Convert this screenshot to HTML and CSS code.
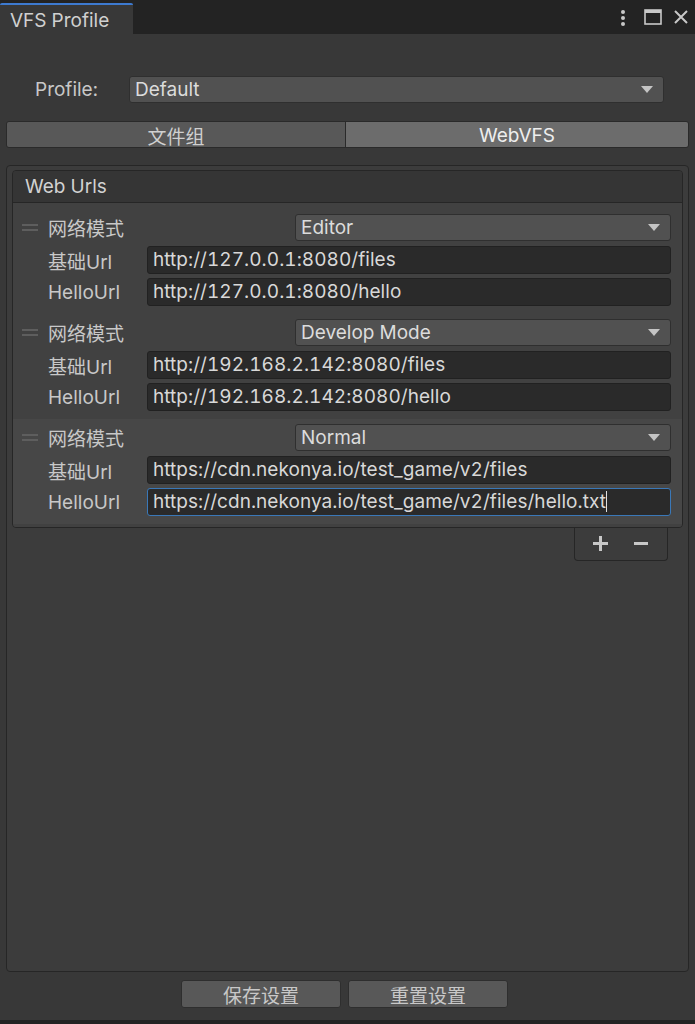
FILE: index.html
```html
<!DOCTYPE html>
<html lang="zh">
<head>
<meta charset="utf-8">
<title>VFS Profile</title>
<link rel="stylesheet" href="styles.css">
</head>
<body>
<div class="titlebar">
  <div class="tab">VFS Profile</div>
  <div class="win-controls">
    <svg class="ic-kebab" width="8" height="18" viewBox="0 0 8 18"><circle cx="4" cy="3" r="2"/><circle cx="4" cy="9" r="2"/><circle cx="4" cy="15" r="2"/></svg>
    <svg class="ic-max" width="18" height="16" viewBox="0 0 18 16"><rect x="1" y="1" width="16" height="14" fill="none" stroke="#c8c8c8" stroke-width="1.6"/><rect x="1" y="1" width="16" height="3" fill="#c8c8c8"/></svg>
    <svg class="ic-close" width="16" height="16" viewBox="0 0 16 16"><path d="M2 2 L14 14 M14 2 L2 14" stroke="#c8c8c8" stroke-width="2" fill="none"/></svg>
  </div>
</div>

<div class="content">
  <div class="profile-row">
    <span class="profile-label">Profile:</span>
    <div class="popup popup-wide"><span>Default</span><span class="arrow"></span></div>
  </div>

  <div class="tabs">
    <div class="seg">文件组</div>
    <div class="seg seg-on">WebVFS</div>
  </div>

  <div class="panel">
    <div class="list">
      <div class="list-head">Web Urls</div>
      <div class="list-body">
        <div class="elem">
          <div class="row">
            <span class="handle"></span><span class="lbl lbl-mode">网络模式</span>
            <div class="popup"><span>Editor</span><span class="arrow"></span></div>
          </div>
          <div class="row">
            <span class="handle-space"></span><span class="lbl">基础Url</span>
            <div class="field">http://127.0.0.1:8080/files</div>
          </div>
          <div class="row">
            <span class="handle-space"></span><span class="lbl">HelloUrl</span>
            <div class="field">http://127.0.0.1:8080/hello</div>
          </div>
        </div>
        <div class="elem">
          <div class="row">
            <span class="handle"></span><span class="lbl lbl-mode">网络模式</span>
            <div class="popup"><span>Develop Mode</span><span class="arrow"></span></div>
          </div>
          <div class="row">
            <span class="handle-space"></span><span class="lbl">基础Url</span>
            <div class="field">http://192.168.2.142:8080/files</div>
          </div>
          <div class="row">
            <span class="handle-space"></span><span class="lbl">HelloUrl</span>
            <div class="field">http://192.168.2.142:8080/hello</div>
          </div>
        </div>
        <div class="elem elem-sel">
          <div class="row">
            <span class="handle"></span><span class="lbl lbl-mode">网络模式</span>
            <div class="popup"><span>Normal</span><span class="arrow"></span></div>
          </div>
          <div class="row">
            <span class="handle-space"></span><span class="lbl">基础Url</span>
            <div class="field">https://cdn.nekonya.io/test_game/v2/files</div>
          </div>
          <div class="row">
            <span class="handle-space"></span><span class="lbl">HelloUrl</span>
            <div class="field field-focus">https://cdn.nekonya.io/test_game/v2/files/hello.txt<span class="caret"></span></div>
          </div>
        </div>
      </div>
    </div>
    <div class="list-foot">
      <span class="pm pm-plus"></span><span class="pm pm-minus"></span>
    </div>
  </div>

  <div class="actions">
    <div class="btn">保存设置</div>
    <div class="btn">重置设置</div>
  </div>
</div>
<div class="bottom-strip"></div>
</body>
</html>
```

FILE: styles.css
```css
* { box-sizing: border-box; }
html, body { margin: 0; padding: 0; }
body {
  width: 695px;
  height: 1024px;
  background: #383838;
  font-family: Inter, "Noto Sans CJK SC", sans-serif;
  font-size: 19px;
  font-variant-numeric: tabular-nums;
  color: #d2d2d2;
  display: flex;
  flex-direction: column;
  overflow: hidden;
}

.titlebar {
  height: 34px;
  background: #232323;
  display: flex;
  align-items: flex-end;
  flex-shrink: 0;
}
.tab {
  width: 133px;
  height: 31px;
  background: #383838;
  border-top: 2px solid #3d7ad0;
  border-radius: 2px 2px 0 0;
  padding-left: 10px;
  line-height: 31px;
  color: #d0d0d0;
}
.win-controls {
  margin-left: auto;
  align-self: stretch;
  display: flex;
  align-items: center;
  padding-right: 6px;
}
.ic-kebab { fill: #c8c8c8; margin-right: 17px; margin-top: 1px; }
.ic-max { margin-right: 11px; }

.content {
  padding: 0 6px;
  display: flex;
  flex-direction: column;
}

.profile-row {
  margin-top: 42px;
  height: 27px;
  display: flex;
  align-items: center;
}
.profile-label {
  width: 123px;
  padding-left: 29px;
  color: #c8c8c8;
}

.popup {
  flex: 1;
  height: 27px;
  background: #515151;
  border: 1px solid #2f2f2f;
  border-radius: 3px;
  display: flex;
  align-items: center;
  padding: 0 10px 0 5px;
  color: #dcdcdc;
}
.popup-wide { margin-right: 25px; }
.arrow {
  margin-left: auto;
  width: 0;
  height: 0;
  border-left: 6px solid transparent;
  border-right: 6px solid transparent;
  border-top: 7px solid #c4c4c4;
}

.tabs {
  margin-top: 18px;
  height: 27px;
  display: grid;
  grid-template-columns: 339px 1fr;
  border: 1px solid #2a2a2a;
  border-radius: 3px;
  overflow: hidden;
}
.seg {
  background: #585858;
  color: #d0d0d0;
  display: flex;
  align-items: center;
  justify-content: center;
  border-right: 1px solid #2a2a2a;
}
.seg-on {
  background: #6c6c6c;
  color: #eeeeee;
  border-right: none;
}

.panel {
  margin-top: 17px;
  height: 807px;
  background: #3c3c3c;
  border: 1px solid #262626;
  border-radius: 4px;
  padding: 4px 5px;
  display: flex;
  flex-direction: column;
}
.list {
  border: 1px solid #262626;
  border-radius: 4px;
  overflow: hidden;
}
.list-head {
  height: 32px;
  background: #353535;
  border-bottom: 1px solid #262626;
  padding-left: 12px;
  line-height: 31px;
  color: #d2d2d2;
}
.list-body {
  background: #414141;
  padding: 6px 0 3px;
}
.elem {
  padding: 5px 11px 8px 9px;
  display: flex;
  flex-direction: column;
  gap: 4px;
}
.elem .row:first-child { margin-bottom: 1px; }
.elem-sel { background: #474747; }
.row {
  height: 28px;
  display: flex;
  align-items: center;
}
.row:first-child { height: 27px; }
.handle {
  width: 16px;
  height: 7px;
  border-top: 2px solid #5e5e5e;
  border-bottom: 2px solid #5e5e5e;
  margin-right: 10px;
}
.handle-space { width: 26px; flex-shrink: 0; }
.lbl {
  width: 99px;
  flex-shrink: 0;
  color: #c8c8c8;
}
.lbl-mode { width: 247px; }
.field {
  flex: 1;
  height: 28px;
  background: #2a2a2a;
  border: 1px solid #212121;
  border-radius: 3px;
  padding-left: 5px;
  line-height: 26px;
  letter-spacing: 0.05px;
  color: #d8d8d8;
  white-space: nowrap;
  overflow: hidden;
}
.field-focus { border-color: #3a78b8; }
.caret {
  display: inline-block;
  width: 1px;
  height: 21px;
  background: #e0e0e0;
  vertical-align: -4px;
}

.list-foot {
  align-self: flex-end;
  margin-right: 15px;
  width: 94px;
  height: 33px;
  border: 1px solid #262626;
  border-top: none;
  border-radius: 0 0 4px 4px;
  background: #3c3c3c;
  display: flex;
  align-items: center;
  gap: 26px;
  padding: 0 0 2px 18px;
}
.pm {
  position: relative;
  width: 15px;
  height: 15px;
}
.pm::before, .pm-plus::after {
  content: "";
  position: absolute;
  background: #c8c8c8;
  left: 0;
  top: 6px;
  width: 15px;
  height: 3px;
}
.pm-plus::after {
  left: 6px;
  top: 0;
  width: 3px;
  height: 15px;
}
.pm-minus::before { width: 14px; }

.actions {
  margin-top: 8px;
  display: flex;
  justify-content: center;
  gap: 7px;
  padding-right: 6px;
}
.btn {
  width: 160px;
  height: 28px;
  background: #585858;
  border: 1px solid #2e2e2e;
  border-radius: 3px;
  color: #c8c8c8;
  display: flex;
  align-items: center;
  justify-content: center;
}

.bottom-strip {
  margin-top: auto;
  height: 4px;
  background: #232323;
  flex-shrink: 0;
}
```
